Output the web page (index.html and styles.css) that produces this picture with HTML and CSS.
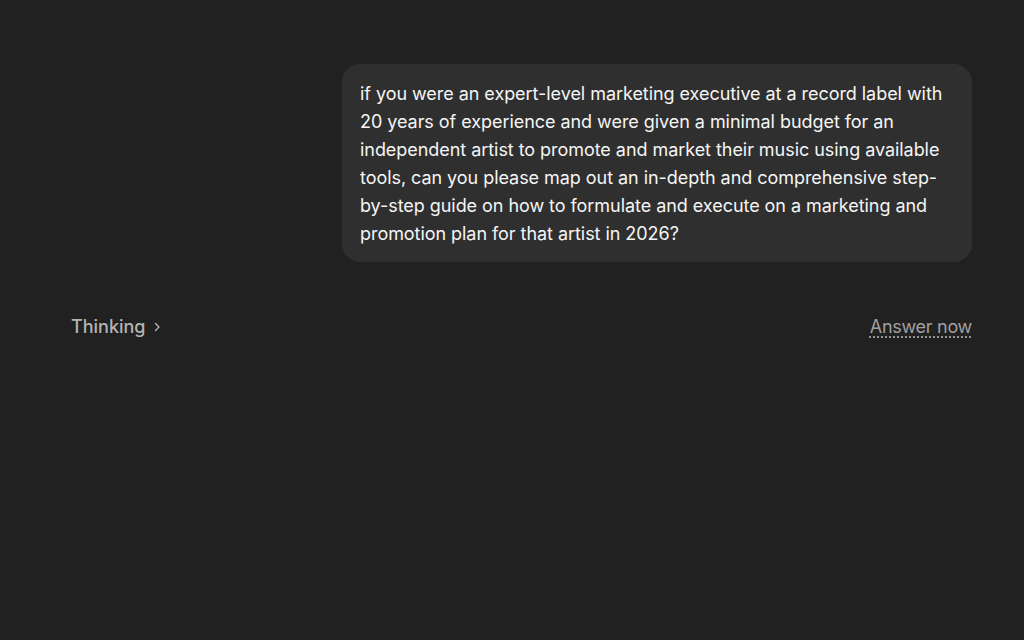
FILE: index.html
```html
<!DOCTYPE html>
<html>
<head>
<meta charset="utf-8">
<link rel="stylesheet" href="styles.css">
</head>
<body>
<main class="thread">
  <div class="user-row">
    <div class="bubble">if you were an expert-level marketing executive at a record label with 20 years of experience and were given a minimal budget for an independent artist to promote and market their music using available tools, can you please map out an in-depth and comprehensive step-by-step guide on how to formulate and execute on a marketing and promotion plan for that artist in 2026?</div>
  </div>
  <div class="status-row">
    <button class="thinking">Thinking
      <svg class="chev" width="12" height="12" viewBox="0 0 12 12"><path d="M4.5 2.5 L8 6 L4.5 9.5" fill="none" stroke="currentColor" stroke-width="1.4" stroke-linecap="round" stroke-linejoin="round"/></svg>
    </button>
    <button class="answer">Answer now</button>
  </div>
</main>
</body>
</html>
```

FILE: styles.css
```css
html, body {
  margin: 0;
  padding: 0;
  background: #212121;
  height: 100%;
}
body {
  font-family: "Inter", "Liberation Sans", sans-serif;
  color: #ececec;
}
.thread {
  padding: 64px 52px 0 71px;
  display: flex;
  flex-direction: column;
}
.user-row {
  display: flex;
  justify-content: flex-end;
}
.bubble {
  width: 594px;
  background: #2f2f2f;
  border-radius: 18px;
  padding: 16px 18px 14px;
  font-size: 18px;
  line-height: 28px;
  letter-spacing: -0.05px;
  color: #f5f5f5;
}
.status-row {
  margin-top: 54px;
  display: flex;
  justify-content: space-between;
  align-items: center;
}
button {
  background: none;
  border: 0;
  padding: 0;
  font-family: inherit;
  cursor: pointer;
}
.thinking {
  display: flex;
  align-items: center;
  gap: 5px;
  font-size: 18px;
  font-weight: 500;
  color: #b4b4b4;
}
.chev { color: #b4b4b4; }
.answer {
  font-size: 18px;
  letter-spacing: -0.3px;
  color: #a0a0a0;
  text-decoration: underline dotted;
  text-underline-offset: 4px;
}
```
